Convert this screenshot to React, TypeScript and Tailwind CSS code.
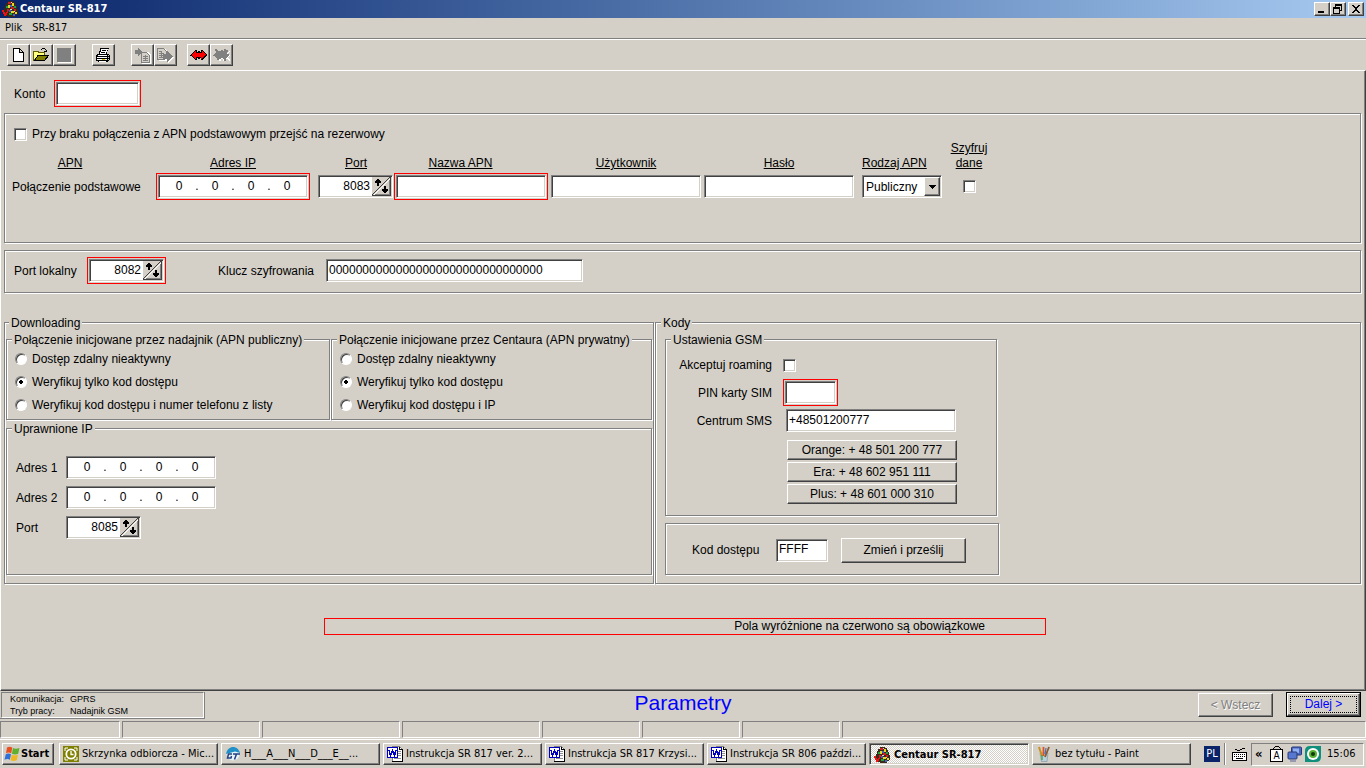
import React from "react";

const sunken =
  "border border-t-[#808080] border-l-[#808080] border-r-white border-b-white shadow-[inset_1px_1px_0_#404040,inset_-1px_-1px_0_#d4d0c8]";
const raised =
  "border border-t-white border-l-white border-r-[#404040] border-b-[#404040] shadow-[inset_-1px_-1px_0_#808080] bg-[#d4d0c8]";
const etched = "border border-[#808080] shadow-[1px_1px_0_#fff,inset_1px_1px_0_#fff]";
const legendCls = "ml-[5px] h-3.5 bg-[#d4d0c8] px-0.5 leading-4";
const sysFont = "font-['DejaVu_Sans_Condensed','DejaVu_Sans',sans-serif]";

function Required({ children }: { children: React.ReactNode }) {
  return <div className="flex w-fit border border-[#ff0000] p-px">{children}</div>;
}

function TextField({ id, label, value = "", width }: { id: string; label?: string; value?: string; width: string }) {
  return (
    <input
      id={id}
      aria-label={label}
      defaultValue={value}
      className={`h-[23px] bg-white px-0.5 pb-0.5 outline-none ${sunken} ${width}`}
    />
  );
}

function IpField({ id, label }: { id: string; label: string }) {
  return (
    <div className={`flex h-[23px] w-[150px] items-center bg-white pb-0.5 pl-[5px] ${sunken}`}>
      {[0, 1, 2, 3].map((n) => (
        <React.Fragment key={n}>
          <input
            id={n === 0 ? id : undefined}
            aria-label={`${label} ${n + 1}`}
            defaultValue="0"
            className="h-4 w-[30px] text-center outline-none"
          />
          {n < 3 && <span className="w-1.5 text-center">.</span>}
        </React.Fragment>
      ))}
    </div>
  );
}

function SpinField({ id, label, value }: { id: string; label?: string; value: string }) {
  return (
    <div className={`flex h-[23px] w-[75px] bg-white p-px ${sunken}`}>
      <input
        id={id}
        aria-label={label}
        defaultValue={value}
        className="min-w-0 flex-1 pr-0.5 pb-0.5 text-right outline-none"
      />
      <button type="button" aria-label="Zmień wartość" className="h-[19px] w-[19px]">
        <svg width="19" height="19" viewBox="0 0 19 19" shapeRendering="crispEdges">
          <rect width="19" height="19" fill="#d4d0c8" />
          <path d="M0 18.5H19M18.5 0V19" stroke="#404040" />
          <path d="M2 17.5H18M17.5 2V18" stroke="#808080" />
          <path d="M2 18L18 2" stroke="#fff" />
          <path d="M0 18L18 0" stroke="#404040" />
          <path d="M5 2h2v1h1v1h1v2H7v3H5V6H3V4h1V3h1zM12 9h2v3h2v2h-1v1h-1v1h-2v-1h-1v-1h-1v-2h2z" fill="#000" />
        </svg>
      </button>
    </div>
  );
}

function Check({ id }: { id: string }) {
  return (
    <input id={id} type="checkbox" className={`block h-[13px] w-[13px] shrink-0 appearance-none bg-white ${sunken}`} />
  );
}

function RadioGroup({ name, options }: { name: string; options: string[] }) {
  return (
    <div className="flex flex-col pt-px pl-2">
      {options.map((o, i) => (
        <label key={o} className="flex h-[23px] items-center gap-[5px]">
          <input
            type="radio"
            name={name}
            defaultChecked={i === 1}
            className="h-3 w-3 shrink-0 appearance-none rounded-full border border-t-[#808080] border-r-white border-b-white border-l-[#808080] bg-white shadow-[inset_1px_1px_0_#404040] checked:bg-[radial-gradient(circle,#000_2px,#fff_2px)]"
          />
          {o}
        </label>
      ))}
    </div>
  );
}

function PushButton({ children, className }: { children: React.ReactNode; className: string }) {
  return (
    <button type="button" className={`${raised} ${className}`}>
      {children}
    </button>
  );
}

function CentaurIcon() {
  return (
    <svg width="16" height="16" viewBox="0 0 16 16" shapeRendering="crispEdges" className="shrink-0">
      <path d="M6 0h5v1h2v2h1v2h1v3h1v5h-1v1h-2v2H6v-1H3v-3H2V7h1V4h1V2h2z" fill="#3a2a18" />
      <path d="M6 1h3v2H6zM9 6h3v2H9zM12 8h2v2h-2zM5 8h2v2H5z" fill="#d02020" />
      <path d="M10 2h2v3h-2zM6 4h2v3H6zM9 10h3v2H9zM13 11h2v2h-2z" fill="#e8d820" />
      <path d="M4 5h2v2H4zM12 5h2v2h-2zM7 12h3v2H7z" fill="#20a040" />
      <path d="M8 4h2v2H8zM7 9h2v2H7zM11 13h2v2h-2z" fill="#4060d0" />
      <path d="M9 1h1v1H9zM8 8h2v1H8zM12 10h1v1h-1z" fill="#d8d8d8" />
      <path d="M0 9h2v2h1v1h1v-1h1V9h1V8h1v2H6v2H5v2H4v1H2v-2H1v-2H0z" fill="#f01010" />
    </svg>
  );
}

function WordIcon() {
  return (
    <svg width="16" height="16" viewBox="0 0 16 16" shapeRendering="crispEdges" className="shrink-0">
      <path d="M5.5 .5H12.5L15.5 3.5V15.5H5.5Z" fill="#fff" stroke="#808080" />
      <path d="M12.5 .5V3.5H15.5V15.5H5" fill="none" stroke="#000" />
      <path d="M11 5.5h3M11 7.5h3M11 9.5h3M7 12.5h7" stroke="#909090" />
      <rect x=".5" y="1.5" width="10" height="10" fill="#fff" stroke="#0000c0" />
      <path d="M2 4L3.5 9.500L5.500 5L7.500 9.500L9 4" fill="none" stroke="#0000c0" strokeWidth="1.6" />
    </svg>
  );
}

function OutlookIcon() {
  return (
    <svg width="16" height="16" viewBox="0 0 16 16" className="shrink-0">
      <rect width="16" height="16" fill="#808000" />
      <path d="M2 5V2h3M11 2h3v3M14 11v3h-3M5 14H2v-3" fill="none" stroke="#fff" />
      <circle cx="8" cy="8" r="4.700" fill="#808000" stroke="#fff" strokeWidth="1.800" />
      <path d="M8 5v3.500h2.500" fill="none" stroke="#fff" strokeWidth="1.300" />
    </svg>
  );
}

function GtIcon() {
  return (
    <svg width="16" height="16" viewBox="0 0 16 16" className="shrink-0">
      <circle cx="8" cy="8" r="6.500" fill="#e8f4fa" />
      <path d="M1 8C2 3 5 1 8 1s6 2 7 6l-5-1.500z" fill="#2090c8" />
      <path d="M7 8H3.500L2.500 12H6L6.500 10M8 8h7M11.500 8L9.500 13.500" fill="none" stroke="#204080" strokeWidth="1.500" />
    </svg>
  );
}

function PaintIcon() {
  return (
    <svg width="16" height="16" viewBox="0 0 16 16" className="shrink-0">
      <path d="M4 7H12L11 15.500H5.500Z" fill="#b8d0dc" stroke="#7890a0" strokeWidth=".6" />
      <path d="M3 1L6 10" stroke="#c89020" strokeWidth="2" />
      <path d="M7.500 1V10" stroke="#e05020" strokeWidth="1.800" />
      <path d="M13 1L9 11" stroke="#8a5a30" strokeWidth="1.800" />
      <path d="M10 2L9 8" stroke="#4070c0" strokeWidth="1.200" />
      <path d="M6 9v5" stroke="#30a040" strokeWidth="1.200" />
    </svg>
  );
}

function FlagIcon() {
  return (
    <svg width="16" height="16" viewBox="0 0 16 16" className="shrink-0">
      <path d="M3 1.500Q5.500 0 8.300 1.500L7.200 7.200Q4.500 5.700 2 7.200Z" fill="#e85020" />
      <path d="M9 2Q11.500 3.500 15.500 2L14.200 7.700Q11 9.200 7.900 7.700Z" fill="#60b030" />
      <path d="M1.800 8.200Q4.500 6.700 7 8.200L5.800 13.800Q3.500 12.300 .5 13.800Z" fill="#3070d8" />
      <path d="M7.700 8.700Q10.500 10.200 14 8.700L12.800 14.300Q9.500 15.800 6.600 14.300Z" fill="#f0b820" />
    </svg>
  );
}

const toolIcons: Record<string, React.ReactNode> = {
  Nowy: (
    <path d="M3.500 1.500H9.500L13.500 5.500V14.500H3.500ZM9.500 1.500V5.500H13.500" fill="#fff" stroke="#000" />
  ),
  Otwórz: (
    <>
      <path d="M.5 13.500V4.500H5.500V5.500H11.500V8.500H5.500Z" fill="#ffff80" stroke="#606000" />
      <path d="M1.500 13.500L5 8.500H15.500L11.500 13.500Z" fill="#808000" stroke="#000" />
      <path d="M8 2.500H9M9 1.500H12M12 2.500H13M13.500 3V5M11 4.500H14" stroke="#000" fill="none" />
    </>
  ),
  Zapisz: (
    <>
      <path d="M2 2H16V16H2Z" fill="#fff" />
      <path d="M1 1H15V15H1Z" fill="#808080" />
    </>
  ),
  Drukuj: (
    <>
      <path d="M5 1h9v1h-1v2h-1v3h2v1h1v5h-1v1h-1v1H3v-1H1V8h1V7h2V4h1z" fill="#000" />
      <path d="M6 2h7v1h-1v2h-1v2H5V5h1z" fill="#fff" />
      <path d="M7 3.500h4M6 5.500h4" stroke="#000" />
      <path d="M3 8h9v1H3zM2 10h10v1H2zM2 12h10v1H2zM4 14h7v.5H4z" fill="#fff" />
      <path d="M13 8h1v1h-1zM13 10h1v1h-1zM13 12h1v1h-1z" fill="#d4d0c8" />
      <path d="M7 12.500h3" stroke="#e0c000" />
    </>
  ),
  Odczytaj: (
    <>
      <path d="M8 5h6l3 3v9H8z" fill="#fff" />
      <path d="M1 3h3V1l5 4-5 4V7H1z" fill="#808080" />
      <path d="M7.500 5.500H12.500L15.500 8.500V15.500H7.500Z" fill="#d4d0c8" stroke="#808080" />
      <path d="M9 9.500h5M9 11.500h5M9 13.500h5M11.500 8v6" stroke="#808080" />
    </>
  ),
  Wyślij: (
    <>
      <path d="M2 2h6l3 3v9H2z" fill="#fff" />
      <path d="M.5 1.500H6.500L9.500 4.500V12.500H.5Z" fill="#d4d0c8" stroke="#808080" />
      <path d="M2 4.500h3M2 6.500h5M2 8.500h5M2 10.500h5M4.500 4v7" stroke="#808080" />
      <path d="M8 8h3V5l6 5.500-6 6V13H8z" fill="#fff" />
      <path d="M6 7h4V4l6 5.500L10 15v-3H6z" fill="#808080" />
    </>
  ),
  Połącz: (
    <>
      <path
        d="M0 8h1V7h1V6h1V5h1V4h1V3h2v2h1V4h2v1h1V3h2v1h1v1h1v1h1v1h1v2h-1v1h-1v1h-1v1h-1v1h-2v-2h-1v1H8v-1H7v2H5v-1H4v-1H3v-1H2v-1H1V9H0z"
        fill="#000"
      />
      <path
        d="M1.500 8h.5V7h1V6h1V5h1V4h1v2h6V4h1v1h1v1h1v1h1v1h-1v1h-1v1h-1v1h-1v1h-1v-2H6v2H5v-1H4v-1H3V9H2z"
        fill="#ff0000"
      />
    </>
  ),
  Rozłącz: (
    <>
      <path d="M2 10h2v2h2v2h2v-2h2v2h2v-2h2l3 3v-2l-2-2 2-3-2-1 2-3h-1l-3 3z" fill="#fff" />
      <path
        d="M0 8h1V7h1V6h1V4H2V2h2v1h1v1h3V3h2v1h1V2h2v1h2v2h-1v2h2v2h-1v1h-1v1h-1v3h-2v-2h-1v-1H8v1H6v1H4v-2H3v-1H2V9H0z"
        fill="#808080"
      />
    </>
  ),
};

function ToolButton({ name }: { name: string }) {
  return (
    <button type="button" aria-label={name} className={`flex h-[22px] w-[23px] items-center justify-center ${raised}`}>
      <svg width="17" height="17" viewBox="0 0 17 17" shapeRendering="crispEdges">
        {toolIcons[name]}
      </svg>
    </button>
  );
}

function TitleBar() {
  return (
    <header
      className={`flex h-[18px] items-center bg-linear-to-r from-[#0a246a] to-[#a6caf0] pr-0.5 pl-0.5 text-[11px] font-bold text-white ${sysFont}`}
    >
      <CentaurIcon />
      <h1 className="ml-0.5 flex-1">Centaur SR-817</h1>
      <div className="flex">
        <button type="button" aria-label="Minimalizuj" className={`h-3.5 w-4 ${raised}`}>
          <svg width="14" height="12" shapeRendering="crispEdges">
            <rect x="3" y="8" width="6" height="2" />
          </svg>
        </button>
        <button type="button" aria-label="Przywróć" className={`h-3.5 w-4 ${raised}`}>
          <svg width="14" height="12" shapeRendering="crispEdges">
            <path d="M4.500 4V2.500H10.500V7.500H9M4 1.500H11M2.500 5.500H8.500V10.500H2.500ZM2 4.500H9" fill="none" stroke="#000" />
          </svg>
        </button>
        <button type="button" aria-label="Zamknij" className={`ml-0.5 h-3.5 w-4 ${raised}`}>
          <svg width="14" height="12" shapeRendering="crispEdges">
            <path
              d="M3 2h2v1h1v1h2V3h1V2h2v1h-1v1H9v1H8v2h1v1h1v1h1v1H9V9H8V8H6v1H5v1H3V9h1V8h1V7h1V5H5V4H4V3H3z"
              fill="#000"
            />
          </svg>
        </button>
      </div>
    </header>
  );
}

function ApnPanel() {
  const head = "self-end text-center underline";
  return (
    <section className={`mr-1 ml-[3px] mt-1.5 h-[130px] pt-[13px] pl-[7px] ${etched}`}>
      <label className="ml-0.5 flex w-fit items-center gap-[5px] leading-3.5">
        <Check id="fallback" />
        Przy braku połączenia z APN podstawowym przejść na rezerwowy
      </label>
      <div className="grid grid-cols-[144px_162px_76px_157px_153px_158px_80px_54px] leading-[15px]">
        <div className={`${head} pr-7`}>APN</div>
        <div className={`${head} pr-2`}>Adres IP</div>
        <div className={head}>Port</div>
        <div className={`${head} pr-6`}>Nazwa APN</div>
        <div className={`${head} pr-[3px]`}>Użytkownik</div>
        <div className={`${head} pr-2`}>Hasło</div>
        <div className="self-end text-left underline">Rodzaj APN</div>
        <label htmlFor="encrypt" className="text-center underline">
          Szyfruj
          <br />
          dane
        </label>
      </div>
      <div className="mt-0.5 grid grid-cols-[144px_162px_76px_157px_153px_158px_80px_54px] items-center">
        <label htmlFor="ip-main">Połączenie podstawowe</label>
        <Required>
          <IpField id="ip-main" label="Adres IP" />
        </Required>
        <SpinField id="port-main" label="Port" value="8083" />
        <Required>
          <TextField id="apn-name" label="Nazwa APN" width="w-[150px]" />
        </Required>
        <TextField id="apn-user" label="Użytkownik" width="w-[150px]" />
        <TextField id="apn-pass" label="Hasło" width="w-[150px]" />
        <div className={`relative h-[23px] bg-white ${sunken}`}>
          <select aria-label="Rodzaj APN" className="h-[21px] w-full appearance-none pl-[3px] outline-none">
            <option>Publiczny</option>
            <option>Prywatny</option>
          </select>
          <span
            className={`pointer-events-none absolute top-px right-px flex h-[19px] w-4 items-center justify-center ${raised}`}
          >
            <svg width="7" height="4" shapeRendering="crispEdges">
              <path d="M0 0h7v1H6v1H5v1H4v1H3V3H2V2H1V1H0z" />
            </svg>
          </span>
        </div>
        <div className="flex justify-center">
          <Check id="encrypt" />
        </div>
      </div>
    </section>
  );
}

function DownloadingPanel() {
  return (
    <fieldset className={`w-[650px] px-px pb-2 ${etched}`}>
      <legend className="ml-[3px] h-3.5 bg-[#d4d0c8] px-0.5 leading-4">Downloading</legend>
      <div className="flex gap-px pt-[3px]">
        <fieldset className={`h-[88px] w-[324px] ${etched}`}>
          <legend className={legendCls}>Połączenie inicjowane przez nadajnik (APN publiczny)</legend>
          <RadioGroup
            name="public"
            options={[
              "Dostęp zdalny nieaktywny",
              "Weryfikuj tylko kod dostępu",
              "Weryfikuj kod dostępu i numer telefonu z listy",
            ]}
          />
        </fieldset>
        <fieldset className={`h-[88px] flex-1 ${etched}`}>
          <legend className={legendCls}>Połączenie inicjowane przez Centaura (APN prywatny)</legend>
          <RadioGroup
            name="private"
            options={["Dostęp zdalny nieaktywny", "Weryfikuj tylko kod dostępu", "Weryfikuj kod dostępu i IP"]}
          />
        </fieldset>
      </div>
      <fieldset className={`mt-px h-[154px] ${etched}`}>
        <legend className={legendCls}>Uprawnione IP</legend>
        <div className="grid grid-cols-[50px_auto] items-center gap-y-[7px] pt-[21px] pl-[9px]">
          <label htmlFor="ip1">Adres 1</label>
          <IpField id="ip1" label="Adres 1" />
          <label htmlFor="ip2">Adres 2</label>
          <IpField id="ip2" label="Adres 2" />
          <label htmlFor="port-ip">Port</label>
          <SpinField id="port-ip" value="8085" />
        </div>
      </fieldset>
    </fieldset>
  );
}

function CodesPanel() {
  const label = "w-[106px] text-right";
  return (
    <fieldset className={`flex-1 pb-2 pl-[9px] ${etched}`}>
      <legend className="-ml-1 h-3.5 bg-[#d4d0c8] px-0.5 leading-4">Kody</legend>
      <fieldset className={`mt-[3px] h-[184px] w-[332px] pt-[9px] ${etched}`}>
        <legend className={legendCls}>Ustawienia GSM</legend>
        <div className="flex h-5 items-center gap-[11px]">
          <label htmlFor="roaming" className={label}>
            Akceptuj roaming
          </label>
          <Check id="roaming" />
        </div>
        <div className="mt-1 flex items-center gap-[11px]">
          <label htmlFor="pin" className={label}>
            PIN karty SIM
          </label>
          <Required>
            <TextField id="pin" width="w-[51px]" />
          </Required>
        </div>
        <div className="mt-[3px] flex items-center gap-3.5">
          <label htmlFor="sms" className={label}>
            Centrum SMS
          </label>
          <TextField id="sms" value="+48501200777" width="w-[170px]" />
        </div>
        <div className="mt-2 ml-[121px] flex w-[170px] flex-col gap-0.5">
          <PushButton className="h-5">Orange: + 48 501 200 777</PushButton>
          <PushButton className="h-5">Era: + 48 602 951 111</PushButton>
          <PushButton className="h-5">Plus: + 48 601 000 310</PushButton>
        </div>
      </fieldset>
      <div className={`mt-[7px] flex h-[52px] w-[334px] items-center pt-0.5 pl-[26px] ${etched}`}>
        <label htmlFor="code" className="w-[84px]">
          Kod dostępu
        </label>
        <TextField id="code" value="FFFF" width="w-[52px]" />
        <PushButton className="ml-[13px] h-[25px] w-[125px]">Zmień i prześlij</PushButton>
      </div>
    </fieldset>
  );
}

const tasks: { icon: React.ReactNode; text: string; active?: boolean }[] = [
  { icon: <OutlookIcon />, text: "Skrzynka odbiorcza - Mic..." },
  { icon: <GtIcon />, text: "H___A___N___D___E__..." },
  { icon: <WordIcon />, text: "Instrukcja SR 817 ver. 2..." },
  { icon: <WordIcon />, text: "Instrukcja SR 817 Krzysi..." },
  { icon: <WordIcon />, text: "Instrukcja SR 806 paździ..." },
  { icon: <CentaurIcon />, text: "Centaur SR-817", active: true },
  { icon: <PaintIcon />, text: "bez tytułu - Paint" },
];

function Taskbar() {
  return (
    <footer
      className={`flex h-[29px] items-center border-t border-white bg-[#d4d0c8] pr-0.5 pl-0.5 text-[11px] whitespace-nowrap ${sysFont}`}
    >
      <button type="button" className={`flex h-[22px] w-[52px] items-center gap-px pl-px font-bold ${raised}`}>
        <FlagIcon />
        Start
      </button>
      <nav className="ml-[5px] flex min-w-0 flex-1 gap-[3px]">
        {tasks.map((t) => (
          <button
            type="button"
            key={t.text}
            className={
              t.active
                ? `flex h-[22px] w-[160px] min-w-0 items-center gap-1 bg-[conic-gradient(#fff_25%,#d4d0c8_0_50%,#fff_0_75%,#d4d0c8_0)] bg-size-[2px_2px] pt-px pl-1 font-bold ${sunken}`
                : `flex h-[22px] w-[159px] min-w-0 items-center gap-[3px] pl-[3px] ${raised}`
            }
          >
            {t.icon}
            <span className="overflow-hidden">{t.text}</span>
          </button>
        ))}
      </nav>
      <span className="flex h-4 w-4 items-center justify-center bg-[#0a246a] text-white">PL</span>
      <span className="ml-1 h-[22px] w-0.5 border-l border-l-[#808080] bg-white" />
      <svg width="16" height="16" viewBox="0 0 16 16" shapeRendering="crispEdges" className="ml-1.5">
        <path d="M3 3.500H5M5 4.500H8M8 3.500H10M10 2.500H13" stroke="#000" />
        <rect x=".5" y="6.500" width="14" height="8" fill="#fff" stroke="#000" />
        <path d="M2 8.500H14M2 10.500H14" stroke="#000" strokeDasharray="1 1" />
        <path d="M4 12.500H11" stroke="#000" />
      </svg>
      <div className="ml-[3px] flex h-[23px] w-[113px] items-center border border-t-[#808080] border-r-white border-b-white border-l-[#808080] pl-[3px]">
        <span className="w-3.5 text-[13px] font-bold">«</span>
        <svg width="16" height="16" viewBox="0 0 16 16" shapeRendering="crispEdges">
          <path d="M4.500 4V2.500L6.500 .5H9.500L11.500 2.500V4" fill="none" stroke="#000" />
          <rect x="1.500" y="3.500" width="12" height="12" fill="#fff" stroke="#000" />
          <text x="7.500" y="13" fontSize="10" textAnchor="middle">
            A
          </text>
        </svg>
        <svg width="16" height="16" viewBox="0 0 16 16" className="ml-0.5">
          <rect x="4.500" y="1" width="10" height="8" rx="1" fill="#4868c0" stroke="#283878" />
          <rect x="6" y="2.500" width="6" height="4.500" fill="#90b0f0" />
          <rect x="1" y="6" width="9" height="7" rx="1" fill="#5878d0" stroke="#283878" />
          <path d="M3 15h6" stroke="#8088a8" strokeWidth="1.500" />
        </svg>
        <svg width="16" height="16" viewBox="0 0 16 16" className="ml-0.5">
          <path d="M5 0H16V11Q16 16 11 16H0V5Q0 0 5 0Z" fill="#10907c" />
          <circle cx="8" cy="8" r="6" fill="#fff" />
          <circle cx="8" cy="8" r="4" fill="#58b030" />
          <circle cx="8" cy="8" r="2" fill="#103810" />
        </svg>
        <span className="ml-1.5">15:06</span>
      </div>
    </footer>
  );
}

const statusCell = "mt-px h-[17px] border border-t-[#808080] border-l-[#808080] border-r-white border-b-white";

export default function App() {
  return (
    <div className="flex min-h-screen flex-col bg-[#d4d0c8] font-['Liberation_Sans',Arial,sans-serif] text-[12px] leading-4 text-black">
      <TitleBar />
      <nav className={`flex h-5 items-center gap-2.5 pl-[5px] text-[11px] ${sysFont}`}>
        <button type="button">Plik</button>
        <button type="button">SR-817</button>
      </nav>
      <div className="flex h-8 border-t border-t-[#808080] pt-[5px] pl-[7px] shadow-[inset_0_1px_0_#fff]">
        <ToolButton name="Nowy" />
        <ToolButton name="Otwórz" />
        <ToolButton name="Zapisz" />
        <div className="ml-4 flex">
          <ToolButton name="Drukuj" />
        </div>
        <div className="ml-4 flex">
          <ToolButton name="Odczytaj" />
          <ToolButton name="Wyślij" />
        </div>
        <div className="ml-2.5 flex">
          <ToolButton name="Połącz" />
          <ToolButton name="Rozłącz" />
        </div>
      </div>
      <main className="flex-1 border border-t-white border-r-[#404040] border-b-[#404040] border-l-white pt-[9px] shadow-[inset_-1px_-1px_0_#808080]">
        <div className="flex items-center pl-[13px]">
          <label htmlFor="account" className="w-10">
            Konto
          </label>
          <Required>
            <TextField id="account" width="w-[83px]" />
          </Required>
        </div>
        <ApnPanel />
        <section className={`mt-[7px] mr-1 ml-[3px] flex h-[43px] items-center pb-0.5 pl-[9px] ${etched}`}>
          <label htmlFor="port-local" className="w-[73px]">
            Port lokalny
          </label>
          <Required>
            <SpinField id="port-local" value="8082" />
          </Required>
          <label htmlFor="key" className="ml-[52px] w-[108px]">
            Klucz szyfrowania
          </label>
          <TextField id="key" value="00000000000000000000000000000000" width="w-[257px]" />
        </section>
        <div className="mt-[22px] mr-1 ml-[3px] flex gap-px">
          <DownloadingPanel />
          <CodesPanel />
        </div>
        <div className="mt-[34px] flex justify-center pl-1">
          <p className="h-[17px] w-[722px] border border-[#ff0000] pr-[60px] text-right leading-[15px]">
            Pola wyróżnione na czerwono są obowiązkowe
          </p>
        </div>
      </main>
      <div className="grid h-[29px] grid-cols-[1fr_auto_1fr]">
        <div className="mt-px flex h-[27px] w-[205px] border-r border-b border-[#808080]">
          <dl className="ml-px grid flex-1 grid-cols-[60px_auto] border border-t-[#808080] border-r-white border-b-white border-l-[#808080] pl-2 text-[9px] leading-3">
            <dt>Komunikacja:</dt>
            <dd>GPRS</dd>
            <dt>Tryb pracy:</dt>
            <dd>Nadajnik GSM</dd>
          </dl>
        </div>
        <h2 className="text-[21px] leading-6 text-[#0000ff]">Parametry</h2>
        <div className="flex items-start justify-end gap-[13px] pt-px pr-[5px]">
          <button
            type="button"
            disabled
            className={`mt-px h-[24px] w-[75px] text-[#808080] text-shadow-[1px_1px_0_#fff] ${raised}`}
          >
            &lt; Wstecz
          </button>
          <div className="border border-black">
            <button type="button" className={`h-[23px] w-[73px] p-0.5 text-[#0000ff] ${raised}`}>
              <span className="block border border-dotted border-black leading-[15px]">Dalej &gt;</span>
            </button>
          </div>
        </div>
      </div>
      <div className="flex h-[19px] gap-0.5 border-b border-b-[#d4d0c8]">
        <div className={`${statusCell} w-[120px]`} />
        <div className={`${statusCell} w-[138px]`} />
        <div className={`${statusCell} w-[138px]`} />
        <div className={`${statusCell} w-[138px]`} />
        <div className={`${statusCell} w-[98px]`} />
        <div className={`${statusCell} w-[98px]`} />
        <div className={`${statusCell} w-[98px]`} />
        <div className={`${statusCell} flex-1`} />
      </div>
      <Taskbar />
    </div>
  );
}
